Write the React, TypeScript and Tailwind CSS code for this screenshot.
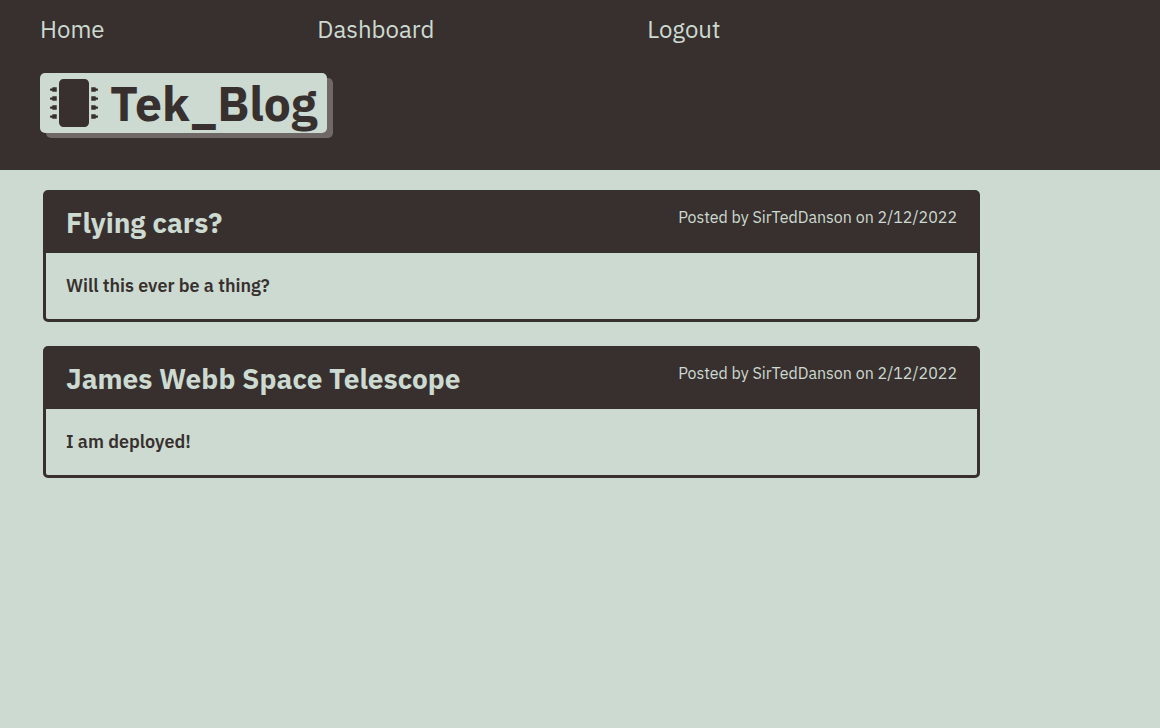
import { FaMicrochip } from "react-icons/fa";

type Post = { title: string; author: string; date: string; body: string };

const links = ["Home", "Dashboard", "Logout"];

const posts: Post[] = [
  { title: "Flying cars?", author: "SirTedDanson", date: "2/12/2022", body: "Will this ever be a thing?" },
  { title: "James Webb Space Telescope", author: "SirTedDanson", date: "2/12/2022", body: "I am deployed!" },
];

function PostCard({ post }: { post: Post }) {
  return (
    <article className="rounded-[5px] border-[3px] border-[#38302e]">
      <header className="flex h-[60px] items-start justify-between bg-[#38302e] px-5 text-[#ccdad1]">
        <h2 className="pt-3 text-[28px] leading-9 font-bold">{post.title}</h2>
        <p className="pt-3 text-base">
          Posted by {post.author} on {post.date}
        </p>
      </header>
      <p className="px-5 py-[21px] text-lg leading-6 font-semibold">{post.body}</p>
    </article>
  );
}

export default function App() {
  return (
    <div className="min-h-screen bg-[#ccdad1] font-['IBM_Plex_Sans','Noto_Sans',sans-serif] text-[#38302e]">
      <header className="bg-[#38302e] px-10 pt-[11px] pb-[37px]">
        <nav className="flex w-[63%] justify-between text-2xl leading-9 text-[#ccdad1]">
          {links.map((link) => (
            <a key={link} href="#">
              {link}
            </a>
          ))}
        </nav>
        <h1 className="mt-[26px] flex h-[60px] w-fit items-center gap-3 rounded-[5px] bg-[#ccdad1] px-[10px] text-5xl font-bold shadow-[6px_5px_0_#6f6866]">
          <FaMicrochip aria-hidden="true" />
          Tek_Blog
        </h1>
      </header>
      <main className="flex w-[85%] flex-col gap-6 py-5 pr-[6px] pl-[43px]">
        {posts.map((post) => (
          <PostCard key={post.title} post={post} />
        ))}
      </main>
    </div>
  );
}
